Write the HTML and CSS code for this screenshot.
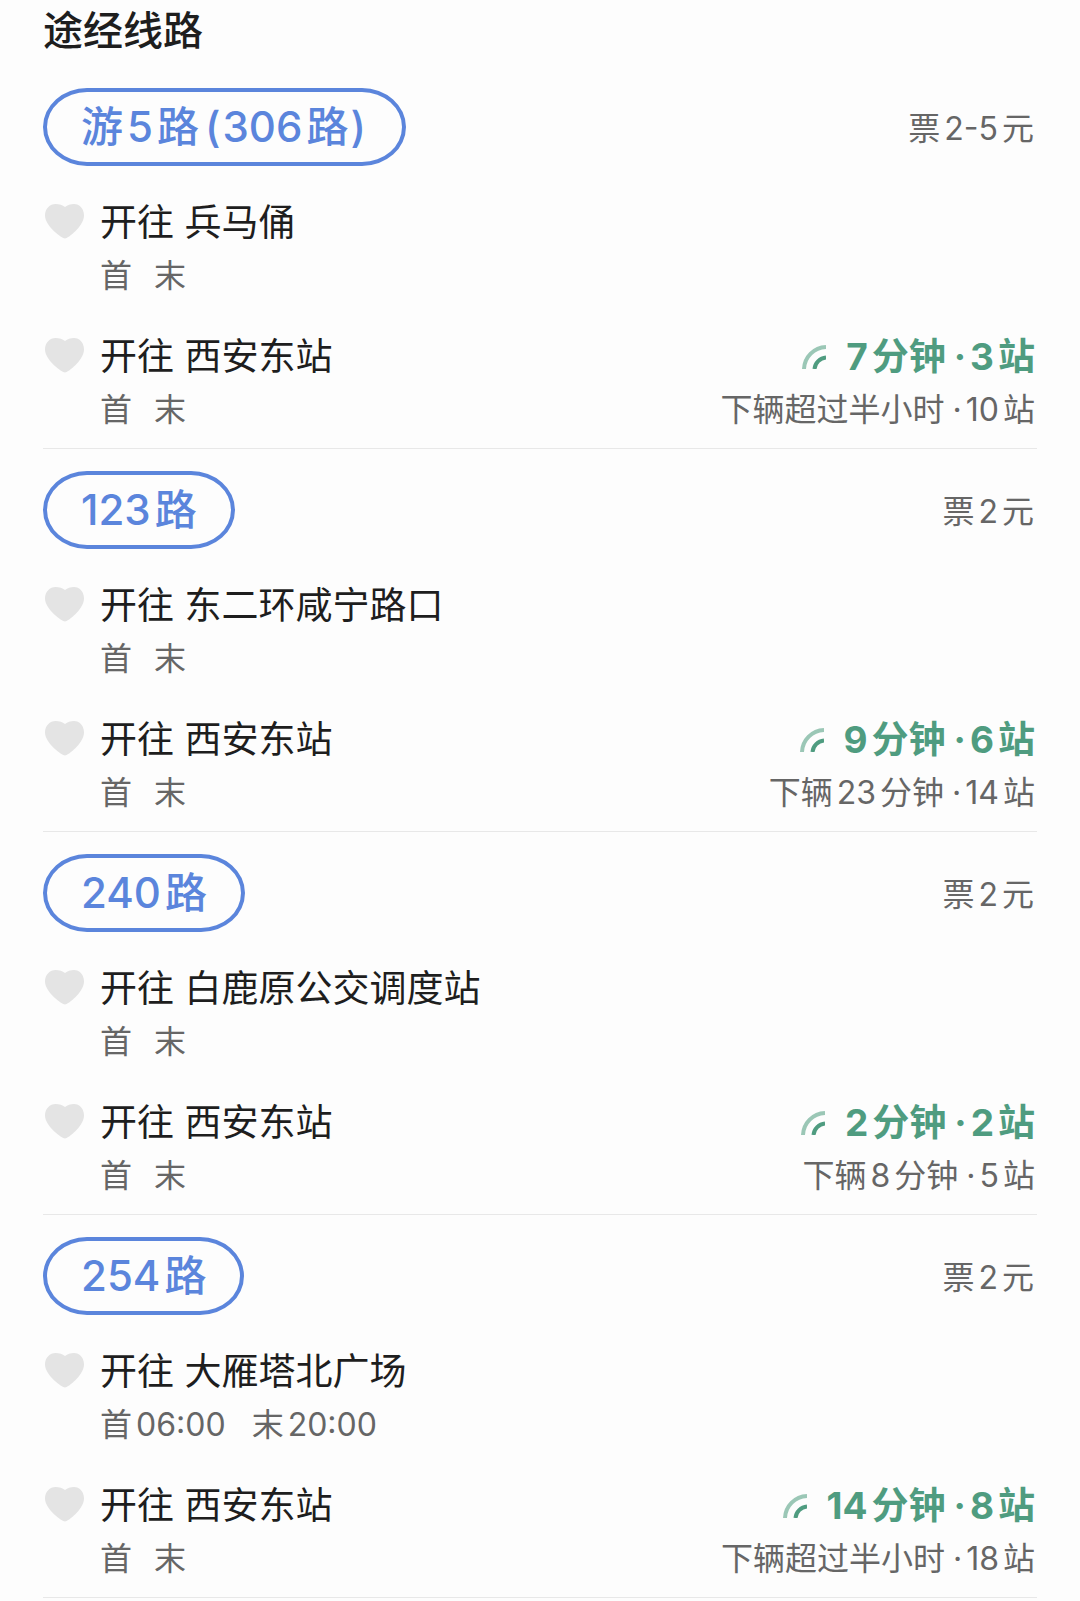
FILE: index.html
```html
<!DOCTYPE html>
<html lang="zh-CN">
<head>
    <meta charset="UTF-8">
    <meta name="viewport" content="width=device-width, initial-scale=1.0">
    <title>途经线路</title>
    <link rel="stylesheet" href="styles.css">
</head>
<body>
    <!-- 图标 -->
    <svg class="icon-defs" aria-hidden="true">
        <symbol id="heart" viewBox="0 0 42 36">
            <path d="M22 35.5 C19 35.5 2 23 2 12.500 C2 5.500 7 1 12.500 1 C16.500 1 19.500 2 22 4 C24.500 2 27.500 1 31 1 C36.500 1 41 5.500 41 12.500 C41 23 25 35.500 22 35.500 Z"/>
        </symbol>
        <symbol id="signal" viewBox="0 0 24 24">
            <path class="signal-outer" d="M2 24 C2.500 12 12 2.500 24 2"/>
            <path class="signal-inner" d="M12.500 24 C13 18 18 13 24 12.500"/>
        </symbol>
    </svg>

    <div class="page">
        <h1 class="page-title">途经线路</h1>

        <section class="route">
            <div class="route-header">
                <a href="#" class="route-name">游<span class="num">5</span>路<span class="num"><span class="bracket">(</span>306</span>路<span class="bracket">)</span></a>
                <span class="route-price">票<span class="num">2-5</span>元</span>
            </div>
            <ul class="direction-list">
                <li class="direction">
                    <button type="button" class="like" aria-label="收藏"><svg><use href="#heart"/></svg></button>
                    <div class="direction-info">
                        <div class="direction-title">开往 兵马俑</div>
                        <div class="direction-time"><span>首</span><span>末</span></div>
                    </div>
                </li>
                <li class="direction">
                    <button type="button" class="like" aria-label="收藏"><svg><use href="#heart"/></svg></button>
                    <div class="direction-info">
                        <div class="direction-title">开往 西安东站</div>
                        <div class="direction-time"><span>首</span><span>末</span></div>
                    </div>
                    <div class="arrival">
                        <div class="arrival-now"><svg class="signal"><use href="#signal"/></svg><span>7<span class="unit">分钟</span><span class="dot">·</span>3<span class="unit last">站</span></span></div>
                        <div class="arrival-next">下辆超过半小时<span class="num"><span class="dot">·</span>10</span>站</div>
                    </div>
                </li>
            </ul>
        </section>

        <section class="route">
            <div class="route-header">
                <a href="#" class="route-name">123<span class="unit last">路</span></a>
                <span class="route-price">票<span class="num">2</span>元</span>
            </div>
            <ul class="direction-list">
                <li class="direction">
                    <button type="button" class="like" aria-label="收藏"><svg><use href="#heart"/></svg></button>
                    <div class="direction-info">
                        <div class="direction-title">开往 东二环咸宁路口</div>
                        <div class="direction-time"><span>首</span><span>末</span></div>
                    </div>
                </li>
                <li class="direction">
                    <button type="button" class="like" aria-label="收藏"><svg><use href="#heart"/></svg></button>
                    <div class="direction-info">
                        <div class="direction-title">开往 西安东站</div>
                        <div class="direction-time"><span>首</span><span>末</span></div>
                    </div>
                    <div class="arrival">
                        <div class="arrival-now"><svg class="signal"><use href="#signal"/></svg><span>9<span class="unit">分钟</span><span class="dot">·</span>6<span class="unit last">站</span></span></div>
                        <div class="arrival-next">下辆<span class="num">23</span>分钟<span class="num"><span class="dot">·</span>14</span>站</div>
                    </div>
                </li>
            </ul>
        </section>

        <section class="route">
            <div class="route-header">
                <a href="#" class="route-name">240<span class="unit last">路</span></a>
                <span class="route-price">票<span class="num">2</span>元</span>
            </div>
            <ul class="direction-list">
                <li class="direction">
                    <button type="button" class="like" aria-label="收藏"><svg><use href="#heart"/></svg></button>
                    <div class="direction-info">
                        <div class="direction-title">开往 白鹿原公交调度站</div>
                        <div class="direction-time"><span>首</span><span>末</span></div>
                    </div>
                </li>
                <li class="direction">
                    <button type="button" class="like" aria-label="收藏"><svg><use href="#heart"/></svg></button>
                    <div class="direction-info">
                        <div class="direction-title">开往 西安东站</div>
                        <div class="direction-time"><span>首</span><span>末</span></div>
                    </div>
                    <div class="arrival">
                        <div class="arrival-now"><svg class="signal"><use href="#signal"/></svg><span>2<span class="unit">分钟</span><span class="dot">·</span>2<span class="unit last">站</span></span></div>
                        <div class="arrival-next">下辆<span class="num">8</span>分钟<span class="num"><span class="dot">·</span>5</span>站</div>
                    </div>
                </li>
            </ul>
        </section>

        <section class="route">
            <div class="route-header">
                <a href="#" class="route-name">254<span class="unit last">路</span></a>
                <span class="route-price">票<span class="num">2</span>元</span>
            </div>
            <ul class="direction-list">
                <li class="direction">
                    <button type="button" class="like" aria-label="收藏"><svg><use href="#heart"/></svg></button>
                    <div class="direction-info">
                        <div class="direction-title">开往 大雁塔北广场</div>
                        <div class="direction-time"><span>首<span class="num">06:00</span></span><span>末<span class="num">20:00</span></span></div>
                    </div>
                </li>
                <li class="direction">
                    <button type="button" class="like" aria-label="收藏"><svg><use href="#heart"/></svg></button>
                    <div class="direction-info">
                        <div class="direction-title">开往 西安东站</div>
                        <div class="direction-time"><span>首</span><span>末</span></div>
                    </div>
                    <div class="arrival">
                        <div class="arrival-now"><svg class="signal"><use href="#signal"/></svg><span>14<span class="unit">分钟</span><span class="dot">·</span>8<span class="unit last">站</span></span></div>
                        <div class="arrival-next">下辆超过半小时<span class="num"><span class="dot">·</span>18</span>站</div>
                    </div>
                </li>
            </ul>
        </section>
    </div>
</body>
</html>
```

FILE: styles.css
```css
* {
    box-sizing: border-box;
}
body {
    margin: 0;
    background: #fdfdfd;
    color: #1e1e1e;
    font-family: Inter, "Noto Sans CJK SC", sans-serif;
}
.icon-defs {
    display: none;
}
.page {
    padding: 0 43px;
}
.page-title {
    margin: 0 0 4px;
    font-size: 40px;
    font-weight: 500;
    line-height: 62px;
}

/* 线路 */
.route {
    padding: 22px 0 12px;
    border-bottom: 1px solid #e8e8e8;
}
.route-header {
    display: flex;
    justify-content: space-between;
    align-items: flex-start;
    margin-bottom: 24px;
}
.route-name {
    padding: 0 34px;
    border: 4px solid #5b85dc;
    border-radius: 44px / 39px;
    color: #5b85dc;
    font-size: 42px;
    font-weight: 500;
    line-height: 70px;
    text-decoration: none;
}
.route-price {
    padding-right: 3px;
    color: #666;
    font-size: 32px;
    line-height: 82px;
}

/* 数字与汉字之间的间隔 */
.num,
.unit {
    margin: 0 4px;
}
.unit.last {
    margin-right: 0;
}
.dot {
    margin: 0 4px;
}
.bracket {
    margin: 0 2px;
}

/* 方向 */
.direction-list {
    display: flex;
    flex-direction: column;
    gap: 26px;
    margin: 0;
    padding: 0;
    list-style: none;
}
.direction {
    display: flex;
    align-items: flex-start;
}
.like {
    display: flex;
    align-items: center;
    height: 54px;
    margin-right: 15px;
    padding: 0;
    border: none;
    background: none;
    cursor: pointer;
}
.like svg {
    width: 42px;
    height: 36px;
    fill: #e4e4e4;
}
.direction-info {
    flex: 1;
    padding-top: 2px;
}
.direction-title {
    font-size: 37px;
    line-height: 54px;
}
.direction-time {
    display: flex;
    gap: 22px;
    color: #666;
    font-size: 32px;
    line-height: 52px;
}

/* 到站信息 */
.arrival {
    padding: 2px 2px 0 0;
    text-align: right;
}
.arrival-now {
    display: flex;
    justify-content: flex-end;
    align-items: center;
    gap: 20px;
    color: #4f9c80;
    font-size: 37px;
    font-weight: 700;
    line-height: 54px;
}
.signal {
    width: 24px;
    height: 24px;
    fill: none;
    stroke-width: 4px;
}
.signal-outer {
    stroke: #9bc7b6;
}
.signal-inner {
    stroke: #4f9c80;
}
.arrival-next {
    color: #666;
    font-size: 32px;
    line-height: 52px;
}
```
